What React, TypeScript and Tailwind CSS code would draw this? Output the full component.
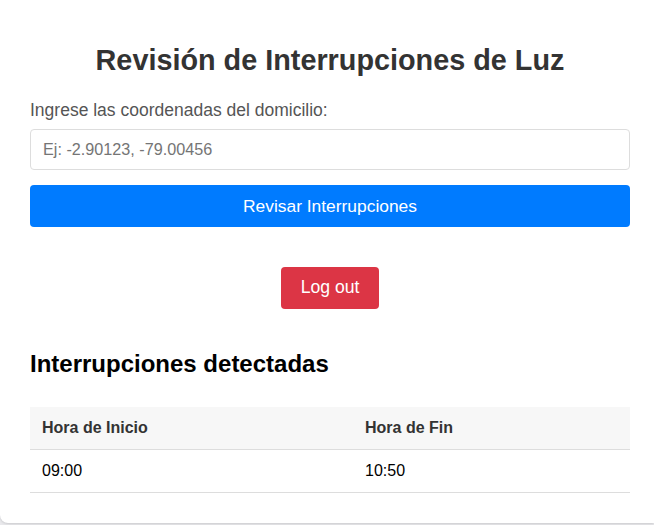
import React, { useState } from "react";

type Outage = { start: string; end: string };

const outages: Outage[] = [{ start: "09:00", end: "10:50" }];

export default function App() {
  const [coords, setCoords] = useState<string>("");

  return (
    <div
      className="min-h-[525px] overflow-hidden bg-[#e9e9ec]"
      style={{ fontFamily: '"Liberation Sans", Arial, sans-serif' }}
    >
      <div className="w-full rounded-bl-lg bg-white pl-[30px] pr-[24px] pt-[46px] pb-[30px] shadow-sm">
        <h1 className="text-center text-[28.8px] font-bold leading-none text-[#333]">
          Revisión de Interrupciones de Luz
        </h1>
        <label className="mt-[25px] block text-[17.5px] leading-tight text-[#555]">
          Ingrese las coordenadas del domicilio:
        </label>
        <input
          type="text"
          value={coords}
          onChange={(e) => setCoords(e.target.value)}
          placeholder="Ej: -2.90123, -79.00456"
          className="mt-[7px] block h-[41px] w-full rounded border border-[#ddd] px-3 text-[16.2px] text-[#333] outline-none placeholder:text-[#757575]"
        />
        <button className="mt-[15px] block h-[42px] w-full rounded bg-[#007bff] text-[17.4px] text-white">
          Revisar Interrupciones
        </button>
        <div className="mt-[40px] flex justify-center">
          <button className="h-[42px] w-[98px] rounded bg-[#dc3545] text-[17.6px] text-white">
            Log out
          </button>
        </div>
        <h2 className="mt-[43px] text-[24px] font-bold leading-none text-black">
          Interrupciones detectadas
        </h2>
        <table className="mt-[31px] w-full border-collapse text-left text-[16px]">
          <thead>
            <tr className="h-[43px] border-b border-[#ddd] bg-[#f7f7f7]">
              <th className="w-[323px] px-3 font-bold text-[#333]">Hora de Inicio</th>
              <th className="px-3 font-bold text-[#333]">Hora de Fin</th>
            </tr>
          </thead>
          <tbody>
            {outages.map((o) => (
              <tr key={o.start} className="h-[43px] border-b border-[#ddd]">
                <td className="px-3 text-black">{o.start}</td>
                <td className="px-3 text-black">{o.end}</td>
              </tr>
            ))}
          </tbody>
        </table>
      </div>
    </div>
  );
}
